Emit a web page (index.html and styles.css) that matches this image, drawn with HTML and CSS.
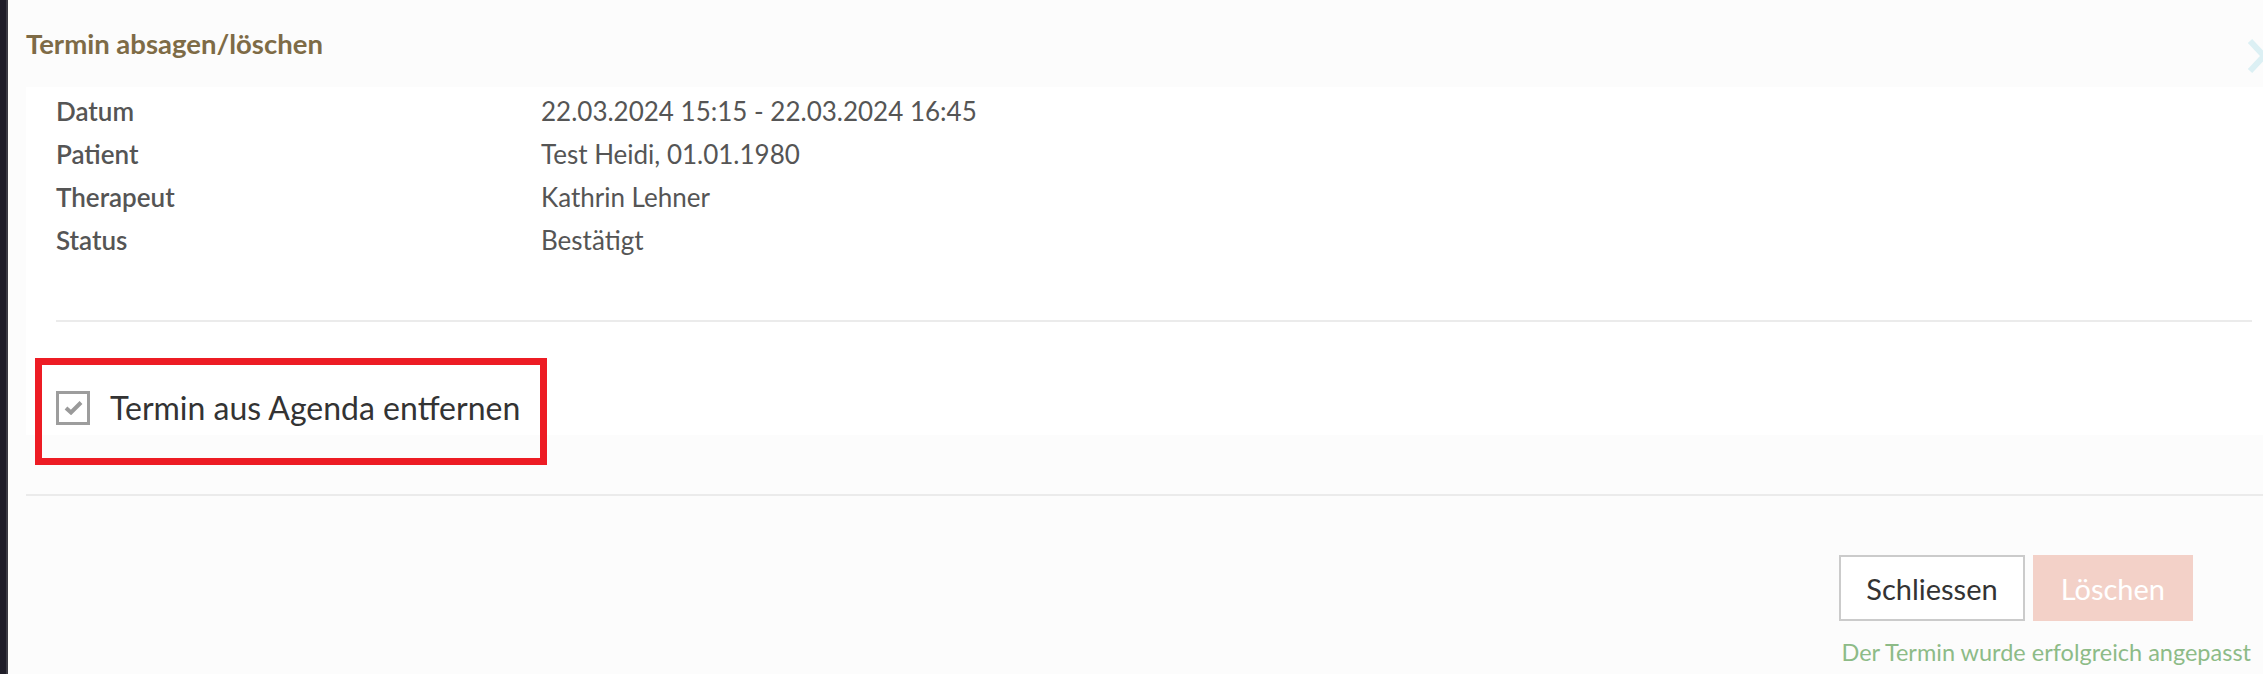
FILE: index.html
```html
<!DOCTYPE html>
<html lang="de">

<head>
    <meta charset="UTF-8">
    <meta name="viewport" content="width=device-width, initial-scale=1.0">
    <title>Termin absagen/löschen</title>
    <link rel="stylesheet" href="styles.css">
</head>

<body>
    <div class="page">
        <div class="sidebar"></div>

        <div class="modal">
            <div class="modal-header">
                <h2>Termin absagen/löschen</h2>
                <span class="next-arrow">
                    <svg width="22" height="36" viewBox="0 0 22 36">
                        <path d="M3 3 L17 18 L3 33" fill="none" stroke="#dcf0f4" stroke-width="6" />
                    </svg>
                </span>
            </div>

            <div class="modal-body">
                <dl class="details">
                    <dt>Datum</dt>
                    <dd>22.03.2024 15:15 - 22.03.2024 16:45</dd>
                    <dt>Patient</dt>
                    <dd>Test Heidi, 01.01.1980</dd>
                    <dt>Therapeut</dt>
                    <dd>Kathrin Lehner</dd>
                    <dt>Status</dt>
                    <dd>Bestätigt</dd>
                </dl>

                <hr class="divider">

                <div class="remove-option">
                    <label class="check">
                        <span class="check-box">
                            <svg width="19" height="15" viewBox="0 0 19 15">
                                <path d="M2 8 L7 12.5 L17 2.5" fill="none" stroke="#9a9a9a" stroke-width="4" />
                            </svg>
                        </span>
                        Termin aus Agenda entfernen
                    </label>
                    <div class="highlight"></div>
                </div>
            </div>

            <div class="modal-footer">
                <div class="buttons">
                    <button class="btn btn-close">Schliessen</button>
                    <button class="btn btn-delete">Löschen</button>
                </div>
                <p class="message">Der Termin wurde erfolgreich angepasst</p>
            </div>
        </div>
    </div>
</body>

</html>
```

FILE: styles.css
```css
body {
    font-family: Lato, "Open Sans", Arial, sans-serif;
    margin: 0;
    padding: 0;
    background: #fcfcfc;
    color: #555;
    height: 674px;
    overflow: hidden;
}

.page {
    display: flex;
    height: 100%;
}

.sidebar {
    width: 6px;
    background-color: #1f1d29;
    border-right: 2px solid #3b3a43;
    flex-shrink: 0;
}

.modal {
    flex: 1;
    position: relative;
}

.modal-header {
    height: 87px;
    padding-left: 18px;
    display: flex;
    align-items: center;
}

.modal-header h2 {
    margin: 0;
    font-size: 27.5px;
    font-weight: 700;
    color: #7e6b46;
}

.next-arrow {
    position: absolute;
    right: -6px;
    top: 38px;
}

.modal-body {
    margin-left: 18px;
    background: #fff;
    height: 348px;
    padding: 0 0 0 30px;
}

.details {
    display: grid;
    grid-template-columns: 485px 1fr;
    grid-auto-rows: 43px;
    align-items: center;
    margin: 0;
    padding-top: 2px;
    font-size: 26px;
}

.details dt {
    font-weight: 600;
}

.details dd {
    margin: 0;
}

.divider {
    border: none;
    border-top: 2px solid #ebebeb;
    margin: 59px 11px 0 0;
}

.remove-option {
    position: relative;
    margin-top: 66px;
    width: 492px;
}

.check {
    display: flex;
    align-items: center;
    gap: 20px;
    font-size: 32px;
    color: #333;
}

.check-box {
    width: 28px;
    height: 28px;
    border: 3px solid #9d9d9d;
    display: flex;
    align-items: center;
    justify-content: center;
}

.highlight {
    position: absolute;
    left: -21px;
    top: -30px;
    width: 498px;
    height: 93px;
    border: 7px solid #ed1c24;
}

.modal-footer {
    border-top: 2px solid #ebebeb;
    margin: 59px 0 0 18px;
    padding-top: 59px;
}

.buttons {
    display: flex;
    justify-content: flex-end;
    gap: 8px;
    margin-right: 70px;
}

.btn {
    height: 66px;
    font-family: inherit;
    font-size: 29px;
    padding: 0 25px;
    border: none;
    cursor: pointer;
}

.btn-close {
    background: #fff;
    color: #333;
    border: 2px solid #cbcbcb;
}

.btn-delete {
    background: #f3d1c8;
    color: #fff;
    padding: 0 28px;
}

.message {
    margin: 17px 12px 0 0;
    text-align: right;
    font-size: 23.5px;
    color: #8dbb87;
}
```
